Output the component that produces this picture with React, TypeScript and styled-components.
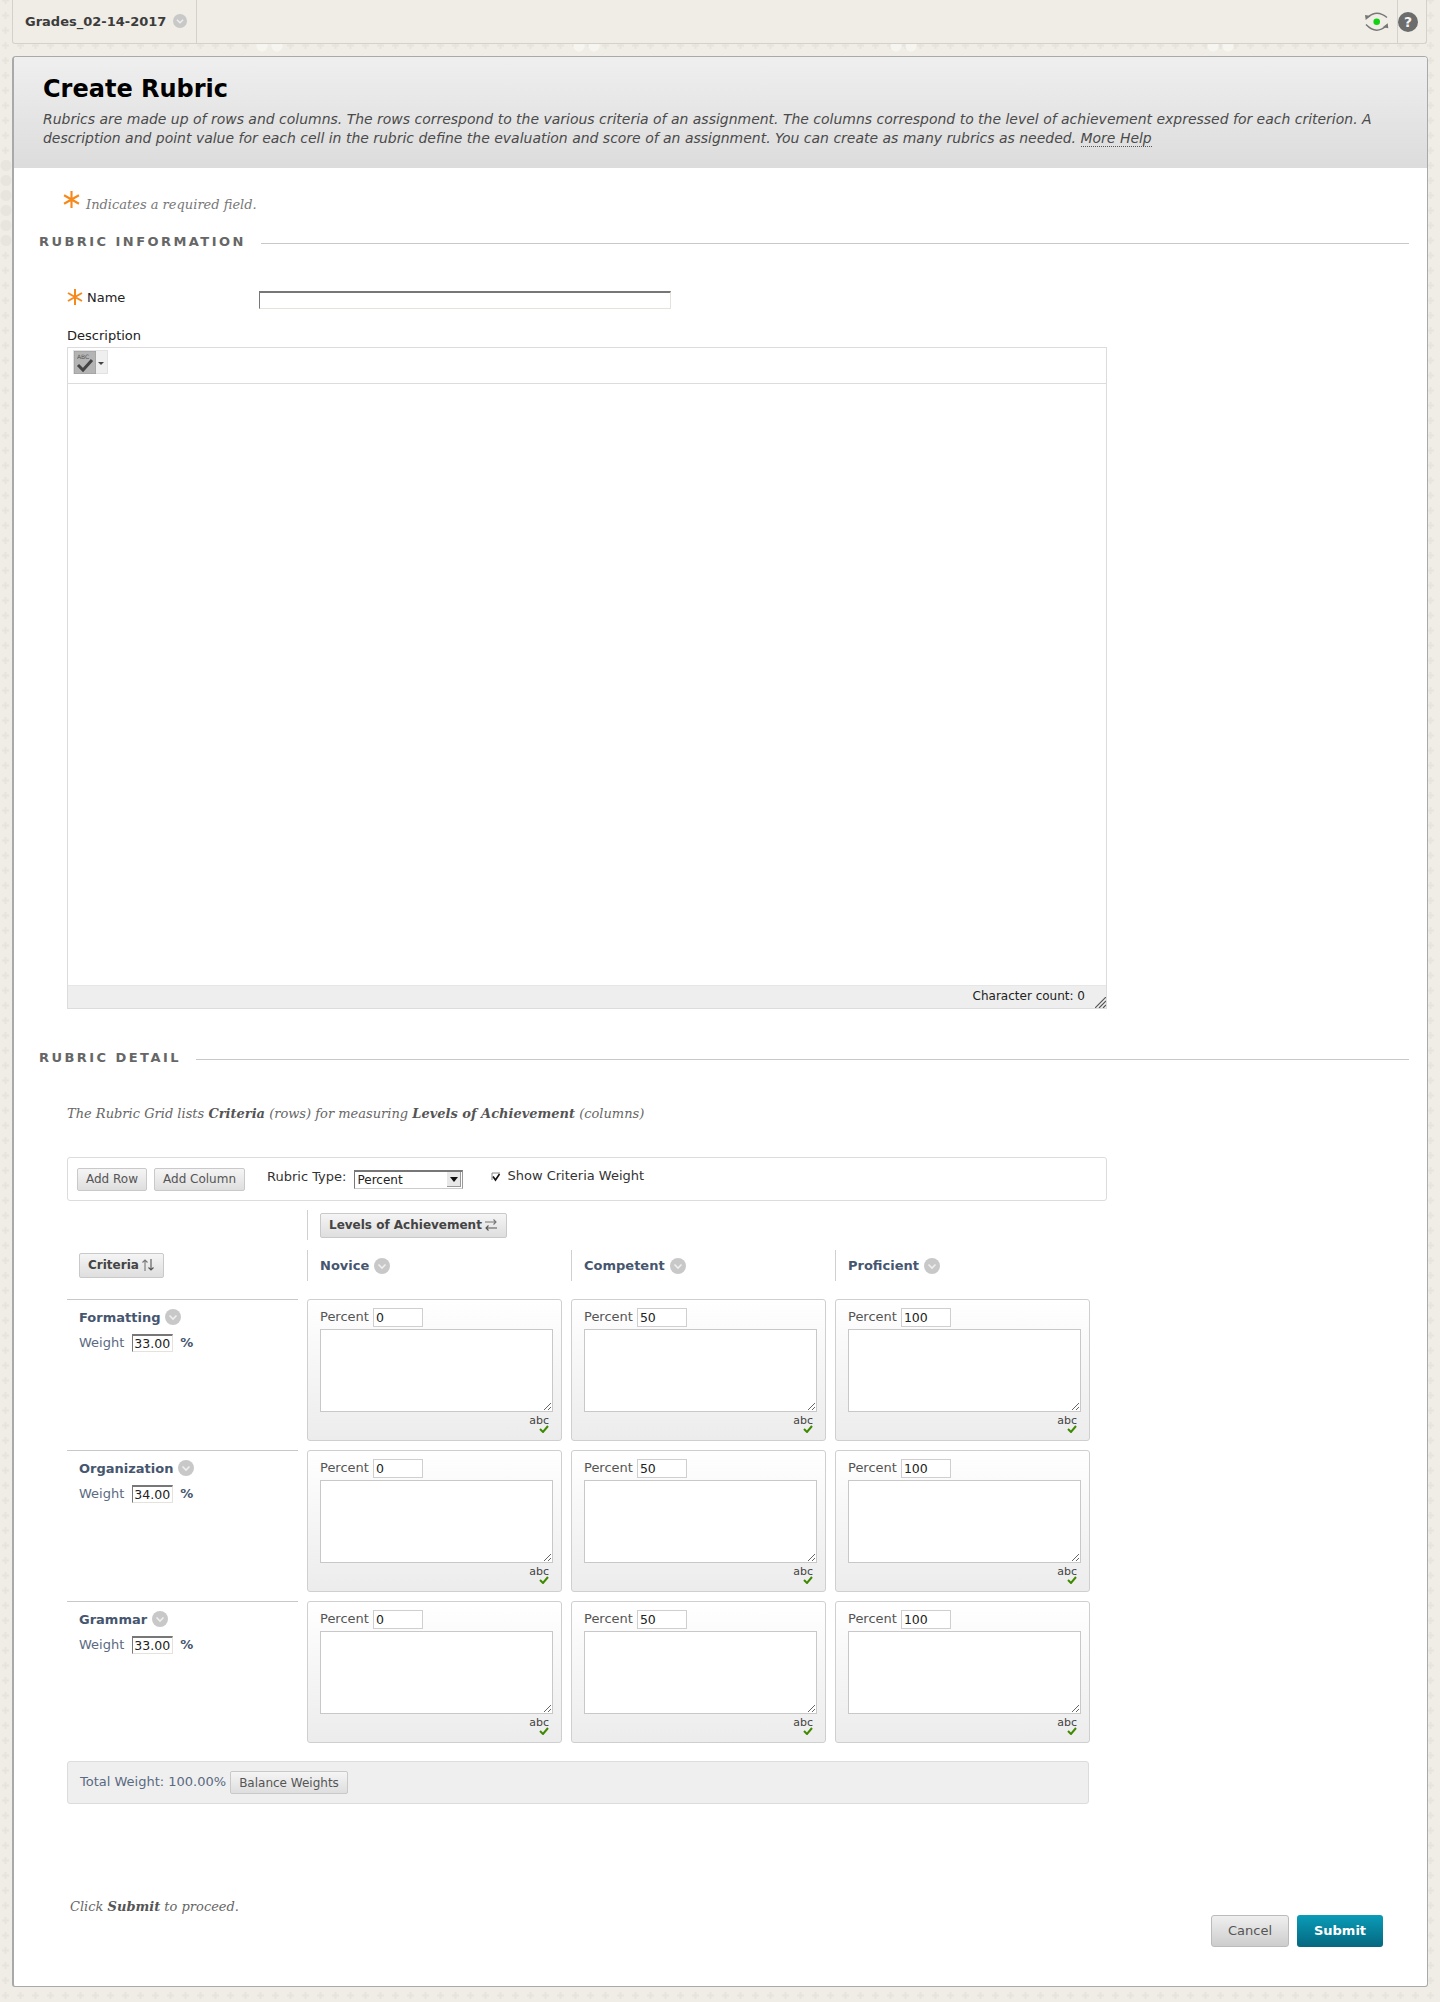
import React from 'react'
import styled, { createGlobalStyle } from 'styled-components'

const sans = '"DejaVu Sans", Verdana, sans-serif'
const serif = '"DejaVu Serif", Georgia, serif'

const plusTile = encodeURIComponent(
	'<svg xmlns="http://www.w3.org/2000/svg" width="15" height="15"><path d="M4 7.5h7M7.500 4v7" stroke="#e6e4dc" stroke-width="2"/></svg>'
)

const GlobalStyle = createGlobalStyle`
	html, body {
		margin: 0;
		padding: 0;
	}
	body {
		height: 2002px;
		overflow: hidden;
		position: relative;
		font-family: ${sans};
		font-size: 13px;
		color: #333;
		background-color: #efede6;
		background-image:
			radial-gradient(circle at 262px 46px, #f6f5f0 5px, transparent 6px),
			radial-gradient(circle at 277px 46px, #f6f5f0 5px, transparent 6px),
			url("data:image/svg+xml,${plusTile}");
		background-size: 317px 2002px, 317px 2002px, 15px 15px;
		background-position: 0 0, 0 0, -2px -7px;
	}
	* {
		box-sizing: border-box;
	}
`

const CRITERIA = [
	{ name: 'Formatting', weight: '33.00' },
	{ name: 'Organization', weight: '34.00' },
	{ name: 'Grammar', weight: '33.00' },
]
const LEVELS = [
	{ name: 'Novice', percent: '0' },
	{ name: 'Competent', percent: '50' },
	{ name: 'Proficient', percent: '100' },
]

function Chevron({ size = 16 }: { size?: number }) {
	return (
		<svg width={size} height={size} viewBox="0 0 16 16">
			<circle cx="8" cy="8" r="8" fill="#c8c8c8" />
			<path d="M4.500 6.500 8 10l3.500-3.500" fill="none" stroke="#efefef" strokeWidth="1.600" />
		</svg>
	)
}

function Star({ size }: { size: number }) {
	return (
		<svg width={size} height={size} viewBox="0 0 16 16">
			<path d="M8 0v16M1 4l14 8M15 4 1 12" stroke="#f7891b" strokeWidth="2" fill="none" />
		</svg>
	)
}

function EyeSync() {
	return (
		<svg width="24" height="19" viewBox="0 0 24 19">
			<path d="M3 5Q12-2.900 22 5.500" fill="none" stroke="#777" strokeWidth="1.400" />
			<path d="M1 12.500Q11 23 21 14" fill="none" stroke="#777" strokeWidth="1.400" />
			<path d="M0 3 5.700 4 .7 8z" fill="#777" />
			<path d="M23.300 16.300 17.700 15.300 22.700 11.300z" fill="#777" />
			<circle cx="11.700" cy="9.700" r="3.300" fill="#12d212" />
		</svg>
	)
}

function SpellIcon() {
	return (
		<svg width="22" height="23" viewBox="0 0 22 23">
			<rect width="22" height="23" fill="#b4b4b4" stroke="#9a9a9a" />
			<path d="M4 14l5 5 9-10" fill="none" stroke="#444" strokeWidth="3" />
		</svg>
	)
}

function SortVertical() {
	return (
		<svg width="14" height="14" viewBox="0 0 14 14">
			<path d="M4 13V2M1.500 4.500 4 2l2.500 2.500" fill="none" stroke="#777" strokeWidth="1.100" />
			<path d="M10 1v11M7.500 9.500 10 12l2.500-2.500" fill="none" stroke="#555" strokeWidth="1.100" />
		</svg>
	)
}

function SortHorizontal() {
	return (
		<svg width="14" height="14" viewBox="0 0 14 14">
			<path d="M1 4h11M9.500 1.500 12 4 9.500 6.500" fill="none" stroke="#777" strokeWidth="1.100" />
			<path d="M13 10H2M4.500 7.500 2 10l2.500 2.500" fill="none" stroke="#555" strokeWidth="1.100" />
		</svg>
	)
}

function Grip() {
	return (
		<svg width="11" height="11" viewBox="0 0 11 11">
			<path d="M0 11 11 0M4 11l7-7M8 11l3-3" stroke="#555" strokeWidth="1.200" fill="none" />
		</svg>
	)
}

function CheckMark() {
	return (
		<svg width="10" height="8" viewBox="0 0 10 8">
			<path d="M1 4l3 3 5-6" fill="none" stroke="#3f8a00" strokeWidth="2" />
		</svg>
	)
}

function App() {
	return (
		<>
			<GlobalStyle />
			<LeftBlobs />
			<Page>
				<TopBar>
					<Tab>
						<TabTitle>Grades_02-14-2017</TabTitle>
						<Chevron size={14} />
					</Tab>
					<TopActions>
						<EyeSync />
						<HelpCell>
							<HelpDot>?</HelpDot>
						</HelpCell>
					</TopActions>
				</TopBar>
				<Card>
					<PageHeader>
						<Title>Create Rubric</Title>
						<Intro>
							Rubrics are made up of rows and columns. The rows correspond to the various criteria of an assignment. The columns correspond to the level of achievement expressed for each criterion. A description and point value for each cell in the rubric define the evaluation and score of an assignment. You can create as many rubrics as needed. <HelpLink>More Help</HelpLink>
						</Intro>
					</PageHeader>
					<Content>
						<RequiredRow>
							<Star size={17} />
							<Hint>Indicates a required field.</Hint>
						</RequiredRow>
						<SectionHeading>
							<SectionLabel>RUBRIC INFORMATION</SectionLabel>
							<SectionLine />
						</SectionHeading>
						<Fields>
							<NameRow>
								<NameLabel>
									<Star size={16} />
									<span>Name</span>
								</NameLabel>
								<NameInput />
							</NameRow>
							<FieldLabel>Description</FieldLabel>
							<Editor>
								<EditorToolbar>
									<SpellButton>
										<SpellIcon />
										<SpellGlyph>ABC</SpellGlyph>
										<SpellCaret />
									</SpellButton>
								</EditorToolbar>
								<EditorBody />
								<EditorFooter>
									<CharCount>Character count: 0</CharCount>
									<GripBox>
										<Grip />
									</GripBox>
								</EditorFooter>
							</Editor>
						</Fields>
						<DetailHeading>
							<SectionLabel>RUBRIC DETAIL</SectionLabel>
							<SectionLine />
						</DetailHeading>
						<Fields>
							<GridIntro>
								The Rubric Grid lists <b>Criteria</b> (rows) for measuring <b>Levels of Achievement</b> (columns)
							</GridIntro>
							<ActionBar>
								<Button>Add Row</Button>
								<Button>Add Column</Button>
								<TypeLabel>Rubric Type:</TypeLabel>
								<FakeSelect>
									<span>Percent</span>
									<SelectArrow />
								</FakeSelect>
								<CheckBox>
									<svg width="10" height="10" viewBox="0 0 10 10">
										<path d="M1 8V1h8" fill="none" stroke="#888" strokeWidth="1" />
										<path d="M2 4.500 4.500 8 8.500 2" fill="none" stroke="#111" strokeWidth="1.600" />
									</svg>
								</CheckBox>
								<WeightToggle>Show Criteria Weight</WeightToggle>
							</ActionBar>
							<LevelsRow>
								<ColumnHead>
									<Button $bold>
										Levels of Achievement
										<SortHorizontal />
									</Button>
								</ColumnHead>
							</LevelsRow>
							<HeadRow>
								<CriteriaHead>
									<Button $bold>
										Criteria
										<SortVertical />
									</Button>
								</CriteriaHead>
								{LEVELS.map((level) => (
									<ColumnHead key={level.name}>
										<RowTitle>{level.name}</RowTitle>
										<Chevron />
									</ColumnHead>
								))}
							</HeadRow>
							{CRITERIA.map((criterion) => (
								<CriterionRow key={criterion.name}>
									<CriterionInfo>
										<CriterionTitle>
											<RowTitle>{criterion.name}</RowTitle>
											<Chevron />
										</CriterionTitle>
										<WeightLine>
											<WeightText>Weight</WeightText>
											<WeightInput defaultValue={criterion.weight} />
											<Percent>%</Percent>
										</WeightLine>
									</CriterionInfo>
									{LEVELS.map((level) => (
										<Cell key={level.name}>
											<PercentLine>
												<PercentText>Percent</PercentText>
												<PercentInput defaultValue={level.percent} />
											</PercentLine>
											<CellText />
											<SpellCheck>
												<span>abc</span>
												<CheckMark />
											</SpellCheck>
										</Cell>
									))}
								</CriterionRow>
							))}
							<TotalBar>
								<TotalText>Total Weight: 100.00%</TotalText>
								<Button>Balance Weights</Button>
							</TotalBar>
						</Fields>
						<Submit>
							<SubmitHint>
								Click <b>Submit</b> to proceed.
							</SubmitHint>
							<SubmitActions>
								<CancelButton>Cancel</CancelButton>
								<SubmitButton>Submit</SubmitButton>
							</SubmitActions>
						</Submit>
					</Content>
				</Card>
			</Page>
		</>
	)
}

export default App

const LeftBlobs = styled.div`
	position: absolute;
	left: 0;
	top: 158px;
	width: 12px;
	height: 90px;
	background: radial-gradient(circle at 6px 7.500px, #e7e5dd 5px, transparent 6px) 0 0 / 12px 15px;
`
const Page = styled.div`
	position: relative;
	width: 1440px;
	height: 2002px;
	padding: 0 12px;
`
const TopBar = styled.div`
	height: 44px;
	width: 1415px;
	display: flex;
	justify-content: space-between;
	background: #efede6;
	border: 1px solid #d3d1c9;
	border-top: 0;
	border-radius: 0 0 3px 3px;
`
const Tab = styled.div`
	width: 184px;
	display: flex;
	align-items: center;
	gap: 7px;
	padding: 0 0 1px 12px;
	border-right: 1px solid #d3d1c9;
`
const TabTitle = styled.span`
	font-size: 13px;
	font-weight: bold;
	color: #3c3c3c;
`
const TopActions = styled.div`
	display: flex;
	align-items: center;
	gap: 8px;
`
const HelpCell = styled.div`
	height: 100%;
	width: 29px;
	display: flex;
	align-items: center;
	justify-content: flex-end;
	padding-right: 8px;
	border-left: 1px solid #d3d1c9;
`
const HelpDot = styled.span`
	width: 20px;
	height: 20px;
	border-radius: 50%;
	background: #6c6c6c;
	color: #f4f4f4;
	font-size: 14px;
	font-weight: bold;
	line-height: 20px;
	text-align: center;
`
const Card = styled.div`
	width: 1416px;
	height: 1931px;
	margin-top: 12px;
	background: #fff;
	border: 1px solid #a9a9a9;
	border-left-width: 2px;
	border-radius: 4px 4px 3px 3px;
	overflow: hidden;
`
const PageHeader = styled.div`
	height: 111px;
	padding: 17px 30px 0 29px;
	background: linear-gradient(#efefef, #dcdcdc);
`
const Title = styled.h1`
	margin: 0;
	font-size: 24px;
	line-height: 30px;
	font-weight: bold;
	color: #000;
`
const Intro = styled.p`
	margin: 6px 0 0;
	font-size: 13.970px;
	line-height: 19px;
	font-style: italic;
	color: #4a4a4a;
`
const HelpLink = styled.span`
	border-bottom: 1px dotted #555;
`
const Content = styled.div`
	padding: 23px 18px 0 25px;
`
const RequiredRow = styled.div`
	height: 21px;
	margin-left: 24px;
	display: flex;
	align-items: flex-start;
	gap: 6px;
`
const Hint = styled.span`
	font-family: ${serif};
	font-style: italic;
	font-size: 13px;
	line-height: 16px;
	margin-top: 6px;
	color: #777;
`
const SectionHeading = styled.div`
	height: 20px;
	margin-top: 19px;
	display: flex;
	align-items: center;
	gap: 15px;
`
const DetailHeading = styled(SectionHeading)`
	margin-top: 38px;
`
const SectionLabel = styled.span`
	font-size: 13px;
	font-weight: bold;
	letter-spacing: 2.450px;
	color: #666;
	white-space: nowrap;
`
const SectionLine = styled.div`
	flex: 1;
	height: 1px;
	margin-top: 4px;
	background: #c8c8c8;
`
const Fields = styled.div`
	margin-left: 28px;
`
const NameRow = styled.div`
	margin-top: 38px;
	display: flex;
	height: 20px;
`
const NameLabel = styled.div`
	width: 192px;
	display: flex;
	align-items: flex-start;
	gap: 4px;
	line-height: 16px;
	color: #222;
	svg {
		flex: none;
	}
	span {
		margin-top: 1px;
	}
`
const inset = `
	border: 1px solid #e4e2da;
	border-top: 2px solid #777;
	border-left: 1px solid #777;
	background: #fff;
	font-family: ${sans};
	font-size: 12px;
	color: #222;
	padding: 0 2px;
	outline: none;
`
const NameInput = styled.input`
	${inset}
	width: 412px;
	height: 18px;
	margin-top: 2px;
`
const FieldLabel = styled.div`
	margin-top: 19px;
	height: 16px;
	line-height: 16px;
	color: #222;
`
const Editor = styled.div`
	margin-top: 3px;
	width: 1040px;
	height: 662px;
	display: flex;
	flex-direction: column;
	border: 1px solid #dcdcdc;
`
const EditorToolbar = styled.div`
	height: 36px;
	padding: 2px 0 0 5px;
	border-bottom: 1px solid #dcdcdc;
`
const SpellButton = styled.div`
	position: relative;
	width: 35px;
	height: 24px;
	background: #efefef;
	border: 1px solid #e2e2e2;
`
const SpellGlyph = styled.span`
	position: absolute;
	left: 3px;
	top: 2px;
	font-size: 6px;
	line-height: 7px;
	color: #555;
`
const SpellCaret = styled.span`
	position: absolute;
	right: 3px;
	top: 11px;
	border: 3px solid transparent;
	border-top: 3px solid #444;
`
const EditorBody = styled.div`
	flex: 1;
	background: #fff;
`
const EditorFooter = styled.div`
	height: 23px;
	display: flex;
	align-items: center;
	justify-content: flex-end;
	background: #eeeeee;
	font-size: 12px;
	color: #222;
	border-top: 1px solid #e6e6e6;
`
const CharCount = styled.span`
	margin-top: -2px;
`
const GripBox = styled.span`
	width: 21px;
	height: 100%;
	display: flex;
	align-items: flex-end;
	justify-content: flex-end;
`
const GridIntro = styled.div`
	margin-top: 39px;
	height: 16px;
	line-height: 16px;
	font-family: ${serif};
	font-style: italic;
	font-size: 13px;
	color: #666;
	b {
		color: #555;
	}
`
const ActionBar = styled.div`
	margin-top: 35px;
	width: 1040px;
	height: 44px;
	display: flex;
	align-items: center;
	padding: 0 9px;
	border: 1px solid #dcdcdc;
	border-radius: 3px;
	color: #333;
	line-height: 16px;
`
const Button = styled.span<{ $bold?: boolean }>`
	display: inline-flex;
	align-items: center;
	justify-content: center;
	gap: 2px;
	height: ${(p) => (p.$bold ? 25 : 23)}px;
	margin-right: 7px;
	padding: 0 8px ${(p) => (p.$bold ? 1 : 0)}px;
	background: linear-gradient(#f5f5f5, #dedede);
	border: 1px solid #c9c9c9;
	border-radius: 2px;
	font-size: 12px;
	font-weight: ${(p) => (p.$bold ? 'bold' : 'normal')};
	color: ${(p) => (p.$bold ? '#444' : '#555')};
	white-space: nowrap;
`
const TypeLabel = styled.span`
	margin: -4px 8px 0 15px;
`
const FakeSelect = styled.div`
	${inset}
	width: 109px;
	height: 19px;
	border-right: 1px solid #999;
	border-bottom: 1px solid #ccc;
	display: flex;
	align-items: center;
	justify-content: space-between;
	padding: 0 1px 0 2px;
	line-height: 16px;
`
const SelectArrow = styled.span`
	width: 14px;
	height: 15px;
	display: flex;
	align-items: center;
	justify-content: center;
	background: #e8e8e8;
	border: 1px solid #999;
	border-top: 0;
	border-left: 0;
	&::after {
		content: '';
		border: 4px solid transparent;
		border-top: 5px solid #111;
		margin-top: 5px;
	}
`
const CheckBox = styled.span`
	margin: -4px 7px 0 28px;
	width: 10px;
	height: 10px;
	display: flex;
`
const WeightToggle = styled.span`
	margin: -6px 0 0 -1px;
`
const gridRow = `
	display: grid;
	grid-template-columns: 231px repeat(3, 255px);
	column-gap: 9px;
`
const LevelsRow = styled.div`
	${gridRow}
	margin-top: 9px;
	height: 30px;
	> :first-child {
		grid-column: 2 / span 3;
	}
`
const HeadRow = styled.div`
	${gridRow}
	margin: 10px 0 18px;
	height: 31px;
`
const CriteriaHead = styled.div`
	display: flex;
	align-items: center;
	padding-left: 12px;
`
const ColumnHead = styled.div`
	display: flex;
	align-items: center;
	gap: 5px;
	padding-left: 12px;
	border-left: 1px solid #d0d0d0;
`
const RowTitle = styled.span`
	font-size: 13px;
	font-weight: bold;
	color: #46566f;
`
const CriterionRow = styled.div`
	${gridRow}
	height: 142px;
	margin-top: 9px;
`
const CriterionInfo = styled.div`
	border-top: 1px solid #c8c8c8;
	padding: 9px 0 0 12px;
	color: #46566f;
`
const CriterionTitle = styled.div`
	display: flex;
	align-items: center;
	gap: 5px;
	height: 16px;
`
const WeightLine = styled.div`
	display: flex;
	align-items: center;
	margin-top: 9px;
	height: 18px;
`
const WeightText = styled.span`
	margin-top: -2px;
	color: #5a6a82;
`
const WeightInput = styled.input`
	${inset}
	width: 41px;
	height: 18px;
	margin-left: 8px;
	font-size: 12.500px;
	padding: 0 1px;
`
const Percent = styled.span`
	margin: -2px 0 0 7px;
	font-weight: bold;
`
const Cell = styled.div`
	padding: 8px 8px 0 12px;
	border: 1px solid #cfcfcf;
	border-radius: 3px;
	background: linear-gradient(#ffffff, #ececec);
`
const PercentLine = styled.div`
	height: 19px;
	display: flex;
	align-items: center;
	gap: 4px;
	color: #555;
`
const PercentText = styled.span`
	margin-top: -2px;
`
const PercentInput = styled.input`
	width: 50px;
	height: 19px;
	border: 1px solid #cfcfcf;
	background: #fff;
	font-family: ${sans};
	font-size: 12.500px;
	color: #222;
	padding: 0 2px;
	outline: none;
`
const CellText = styled.textarea`
	display: block;
	width: 233px;
	height: 83px;
	margin: 2px 0 0;
	border: 1px solid #c8c8c8;
	background: #fff;
	outline: none;
	resize: both;
`
const SpellCheck = styled.div`
	width: 233px;
	display: flex;
	flex-direction: column;
	align-items: flex-end;
	padding-right: 4px;
	margin-top: 3px;
	font-size: 11px;
	line-height: 11px;
	color: #444;
	svg {
		margin-top: -1px;
	}
`
const TotalBar = styled.div`
	margin-top: 18px;
	width: 1022px;
	height: 43px;
	display: flex;
	align-items: center;
	gap: 4px;
	padding-left: 12px;
	background: #efefef;
	border: 1px solid #dcdcdc;
	border-radius: 3px;
	color: #5a6a82;
`
const TotalText = styled.span`
	margin-top: -3px;
`
const Submit = styled.div`
	margin-top: 95px;
	padding: 0 26px 0 31px;
	display: flex;
	justify-content: space-between;
`
const SubmitHint = styled.div`
	font-family: ${serif};
	font-style: italic;
	font-size: 13px;
	line-height: 16px;
	color: #666;
	b {
		color: #555;
	}
`
const SubmitActions = styled.div`
	margin-top: 16px;
	display: flex;
	gap: 8px;
`
const CancelButton = styled.div`
	width: 78px;
	height: 32px;
	padding-bottom: 1px;
	display: flex;
	align-items: center;
	justify-content: center;
	background: linear-gradient(#efefef, #cdcdcd);
	border: 1px solid #bbb;
	border-radius: 3px;
	color: #555;
	font-size: 13px;
`
const SubmitButton = styled.div`
	width: 86px;
	height: 32px;
	padding-bottom: 1px;
	display: flex;
	align-items: center;
	justify-content: center;
	background: linear-gradient(#0a9cb8, #05677f);
	border-radius: 3px;
	color: #fff;
	font-size: 13px;
	font-weight: bold;
`
